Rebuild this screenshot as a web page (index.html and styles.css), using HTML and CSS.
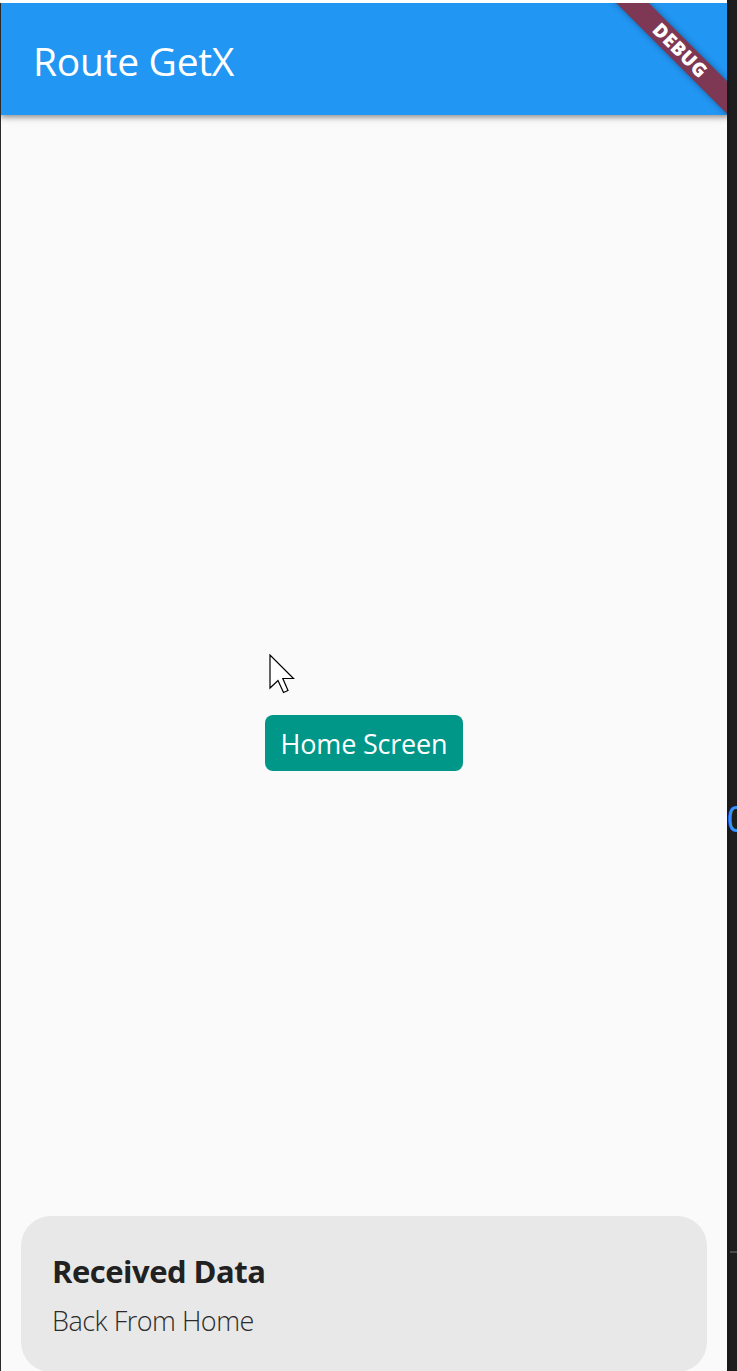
FILE: index.html
```html
<!DOCTYPE html>
<html>
<head>
<meta charset="utf-8">
<link rel="stylesheet" href="styles.css">
</head>
<body>
<div class="screen">
  <div class="edge-left"></div>
  <div class="device">
    <div class="topline"></div>
    <div class="app">
      <header class="appbar">
        <h1 class="title">Route GetX</h1>
      </header>
      <main class="content">
        <button class="btn">Home Screen</button>
      </main>
      <div class="banner"><span>DEBUG</span></div>
      <svg class="cursor" width="26" height="40" viewBox="0 0 26 40">
        <path d="M1 1 V34 L9 26.5 L14.5 38.5 L19 36.5 L13.8 24.5 H24.5 Z" fill="#fff" stroke="#000" stroke-width="1.2" stroke-linejoin="miter"/>
      </svg>
      <div class="snackbar">
        <div class="snack-title">Received Data</div>
        <div class="snack-msg">Back From Home</div>
      </div>
    </div>
  </div>
  <div class="edge-right">
    <div class="glyph">0</div>
    <div class="rule"></div>
  </div>
</div>
</body>
</html>
```

FILE: styles.css
```css
* { box-sizing: border-box; }
html, body { margin: 0; padding: 0; }
body { background: #1e1e1e; font-family: "Open Sans", "Noto Sans", sans-serif; }

.screen { display: flex; width: 737px; height: 1371px; overflow: hidden; }

.edge-left { width: 1px; background: #2a2a2a; border-top: 3px solid #ffffff; }

.device { width: 726px; display: flex; flex-direction: column; }
.topline { height: 3px; background: #ffffff; }

.app {
  position: relative;
  flex: 1;
  display: flex;
  flex-direction: column;
  background: #fafafa;
  overflow: hidden;
}

.appbar {
  height: 112px;
  flex: none;
  background: #2196f3;
  display: flex;
  align-items: center;
  padding-left: 32px;
  box-shadow: 0 2px 4px rgba(0,0,0,0.2), 0 4px 5px rgba(0,0,0,0.14), 0 1px 10px rgba(0,0,0,0.12);
  position: relative;
  z-index: 1;
}
.title {
  margin: 0;
  color: #ffffff;
  font-size: 39px;
  font-weight: 400;
  letter-spacing: -0.3px;
  line-height: 1;
  padding-top: 3px;
}

.content {
  flex: 1;
  display: flex;
  align-items: center;
  justify-content: center;
}

.btn {
  width: 198px;
  height: 56px;
  border: none;
  border-radius: 8px;
  background: #009688;
  color: #ffffff;
  font-family: "Open Sans", "Noto Sans", sans-serif;
  font-size: 27px;
  letter-spacing: -0.2px;
  padding: 0;
}

.banner {
  position: absolute;
  left: 579px;
  top: 36px;
  width: 200px;
  height: 23px;
  background: #7e3854;
  transform: rotate(45deg);
  display: flex;
  align-items: center;
  justify-content: center;
  box-shadow: 0 0 6px rgba(0,0,0,0.35);
  z-index: 2;
}
.banner span {
  color: #ffffff;
  font-family: "Open Sans", "DejaVu Sans", sans-serif;
  font-weight: 800;
  font-size: 19px;
  line-height: 1;
  letter-spacing: 0.5px;
}

.cursor {
  position: absolute;
  left: 268px;
  top: 651px;
  z-index: 3;
}

.snackbar {
  position: absolute;
  left: 20px;
  right: 20px;
  top: 1213px;
  height: 156px;
  background: #e8e8e8;
  border-radius: 30px;
  padding: 33px 31px 0;
  z-index: 2;
}
.snack-title {
  color: #212121;
  font-size: 31px;
  font-weight: 700;
  line-height: 44px;
  letter-spacing: -0.5px;
}
.snack-msg {
  margin-top: 8px;
  color: #2b2b2b;
  font-size: 27px;
  font-weight: 300;
  line-height: 40px;
  letter-spacing: -0.5px;
}

.edge-right {
  width: 10px;
  background: #1e1e1e;
  border-left: 3px solid #191919;
  padding-top: 800px;
  display: flex;
  flex-direction: column;
}
.glyph {
  color: #3794ff;
  font-family: "Liberation Sans", sans-serif;
  font-size: 36px;
  line-height: 40px;
  margin-left: -3px;
  width: 20px;
}
.rule {
  margin-top: 411px;
  height: 2px;
  background: #4a4a4a;
}
```
